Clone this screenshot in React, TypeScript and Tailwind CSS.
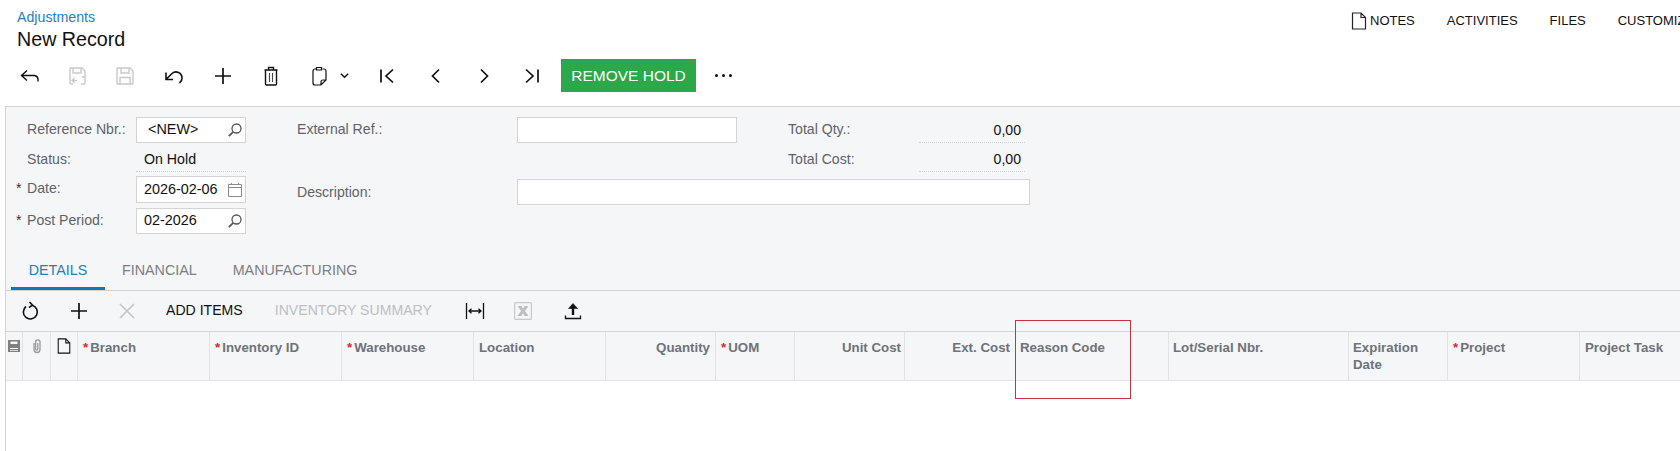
import type { ReactNode } from "react";

const font = "font-['Liberation_Sans',Arial,sans-serif]";

function Ico({ size = 24, color = "#111", sw = 1.4, children }: { size?: number; color?: string; sw?: number; children: ReactNode }) {
  return (
    <svg width={size} height={size} viewBox="0 0 24 24" fill="none" stroke={color} strokeWidth={sw}>
      {children}
    </svg>
  );
}

const BackIcon = () => (
  <Ico><path d="M3.500 11.500h13a4 4 0 0 1 3.500 3.500v2.500M9 6.500l-5.500 5 5.500 5" /></Ico>
);
const SaveBackIcon = () => (
  <Ico color="#c9c9c9">
    <path d="M8 20H6a1 1 0 0 1-1-1V5a1 1 0 0 1 1-1h11l3 3v12a1 1 0 0 1-1 1h-3M8 4v5h8V4M5 13h1M12 16.500H7M9.500 14 7 16.500 9.500 19M17 13h3" />
  </Ico>
);
const SaveIcon = () => (
  <Ico color="#c9c9c9">
    <path d="M5 4h12l3 3v12a1 1 0 0 1-1 1H5a1 1 0 0 1-1-1V5a1 1 0 0 1 1-1ZM8 4v5h8V4M7 20v-6.500h10V20" />
  </Ico>
);
const UndoIcon = () => (
  <Ico sw={1.6}><path d="M4 8.500V15.500h7M4.500 15 10 9.500a6 6 0 0 1 10 4.500 6 6 0 0 1-2.500 5" /></Ico>
);
const PlusIcon = () => (
  <Ico sw={1.7}><path d="M12 4v16M4 12h16" /></Ico>
);
const TrashIcon = () => (
  <Ico>
    <path d="M5.500 6h13M9.500 6V3.500h5V6M6.500 6v14a1 1 0 0 0 1 1h9a1 1 0 0 0 1-1V6" />
    <path d="M10.500 9v9M13.500 9v9" stroke="#444" strokeWidth={1.100} />
  </Ico>
);
const ClipboardIcon = () => (
  <Ico sw={1.2}>
    <path d="M9.500 5H8A2 2 0 0 0 6 7v12a2 2 0 0 0 2 2h6l5-5V7a2 2 0 0 0-2-2h-1.500M9.500 3.500h5V6h-5ZM14 21v-3a2 2 0 0 1 2-2h3" />
  </Ico>
);
const ChevDown = () => (
  <svg width={11} height={11} viewBox="0 0 12 12" fill="none" stroke="#111" strokeWidth={1.5}>
    <path d="M2 4l4 4 4-4" />
  </svg>
);
const FirstIcon = () => (
  <Ico sw={1.7}><path d="M6 5.500v13M18 5.500 11 12l7 6.500" /></Ico>
);
const PrevIcon = () => (
  <Ico sw={1.7}><path d="M15 5.500 8.500 12l6.500 6.500" /></Ico>
);
const NextIcon = () => (
  <Ico sw={1.7}><path d="M9 5.500 15.500 12 9 18.500" /></Ico>
);
const LastIcon = () => (
  <Ico sw={1.7}><path d="M18 5.500v13M6 5.500 13 12l-7 6.500" /></Ico>
);
const SearchIcon = () => (
  <svg width={16} height={16} viewBox="0 0 16 16" fill="none" stroke="#555" strokeWidth={1.3}>
    <circle cx={9.500} cy={6.500} r={4.500} />
    <path d="M6.200 9.800 1.800 14.200" strokeWidth={1.8} />
  </svg>
);
const CalendarIcon = () => (
  <svg width={16} height={16} viewBox="0 0 16 16" fill="none" stroke="#8a8a8a" strokeWidth={1}>
    <path d="M1.500 2.500h13v12h-13ZM1.500 5.500h13M4.500 1v2M11.500 1v2" />
  </svg>
);
const NoteIcon = ({ color = "#222", size = 18 }: { color?: string; size?: number }) => (
  <svg className="shrink-0" width={size} height={size} viewBox="0 0 18 18" fill="none" stroke={color} strokeWidth={1.2}>
    <path d="M2.500 1h8.500l4.500 4.500V17h-13ZM11 1v4.500h4.500" />
  </svg>
);
const RefreshIcon = () => (
  <Ico sw={1.6}><path d="M13 6.200A7 7 0 1 1 7 7.500M10.500 3 13.500 6.200 10 8.500" /></Ico>
);
const CloseIcon = () => (
  <Ico color="#c4c4c4" sw={1.6}><path d="M5 5l14 14M19 5 5 19" /></Ico>
);
const FitIcon = () => (
  <svg width={20} height={18} viewBox="0 0 20 18" fill="none" stroke="#111" strokeWidth={1.300}>
    <path d="M1.500 1v16M18.500 1v16" />
    <path d="M4 9h12M6.500 6.800 4 9l2.500 2.200M13.500 6.800 16 9l-2.500 2.200" />
  </svg>
);
const ExcelIcon = () => (
  <svg width={18} height={18} viewBox="0 0 18 18" fill="none">
    <rect x={0.600} y={0.600} width={16.800} height={16.800} rx={1} stroke="#c8c8c8" strokeWidth={1.200} />
    <path d="M3.500 4h4l1.500 2.800L10.500 4h4l-3.500 5 3.500 5h-4L9 11.200 7.500 14h-4L7 9Z" fill="#bfbfbf" />
  </svg>
);
const UploadIcon = () => (
  <svg width={20} height={20} viewBox="0 0 20 20" fill="none" stroke="#111">
    <path d="M10 4v10" strokeWidth={2.400} />
    <path d="M5.500 7.500 10 2.500l4.500 5Z" fill="#111" strokeWidth={0.600} />
    <path d="M2.500 14.500v3h15v-3" strokeWidth={1.300} />
  </svg>
);
const PrintIcon = () => (
  <svg width={14} height={14} viewBox="0 0 14 14" fill="#808080">
    <path d="M1 1h12v12H1ZM3.500 2.500V5h7V2.500ZM3 9v1h8V9Zm0 2v.800h8V11Z" fillRule="evenodd" />
  </svg>
);
const ClipIcon = () => (
  <svg width={14} height={16} viewBox="0 0 14 16" fill="none" stroke="#9a9a9a" strokeWidth={1.300}>
    <path d="M4 5v6.500a3 3 0 0 0 6 0V4a2.200 2.200 0 0 0-4.400 0v7a1 1 0 0 0 2.200 0V5" />
  </svg>
);

const mainTools = [
  { cls: "", icon: <BackIcon /> },
  { cls: "ml-[23px]", icon: <SaveBackIcon /> },
  { cls: "ml-[24px]", icon: <SaveIcon /> },
  { cls: "ml-[25px]", icon: <UndoIcon /> },
  { cls: "ml-[25px]", icon: <PlusIcon /> },
  { cls: "ml-[24px]", icon: <TrashIcon /> },
  { cls: "ml-[24px]", icon: <ClipboardIcon /> },
  { cls: "ml-[8px]", icon: <ChevDown /> },
  { cls: "ml-[25px]", icon: <FirstIcon /> },
  { cls: "ml-[25px]", icon: <PrevIcon /> },
  { cls: "ml-[24px]", icon: <NextIcon /> },
  { cls: "ml-[24px]", icon: <LastIcon /> },
];

function Label({ star, children }: { star?: boolean; children: ReactNode }) {
  return (
    <div className="flex w-[120px] items-center pb-[1px] text-[14.100px] text-[#5f6368]">
      <span className="w-[11px] text-[#333]">{star ? "*" : ""}</span>
      {children}
    </div>
  );
}

function Input({ children, icon, pl = "pl-[7px]" }: { children: ReactNode; icon: ReactNode; pl?: string }) {
  return (
    <div className={`flex h-full w-[110px] items-center justify-between border border-[#d2d5d8] bg-white ${pl} pr-[2px] text-[14.400px] text-[#111]`}>
      <span>{children}</span>
      {icon}
    </div>
  );
}

const columns = [
  { w: 132, label: "Branch", star: true, cls: "border-r pl-[5px]" },
  { w: 132, label: "Inventory ID", star: true, cls: "border-r pl-[5px]" },
  { w: 132, label: "Warehouse", star: true, cls: "border-r pl-[5px]" },
  { w: 132, label: "Location", cls: "border-r pl-[5px]" },
  { w: 110, label: "Quantity", cls: "border-r pr-[5px] text-right" },
  { w: 79, label: "UOM", star: true, cls: "border-r pl-[5px]" },
  { w: 110, label: "Unit Cost", cls: "border-r pr-[3px] text-right" },
  { w: 111, label: "Ext. Cost", cls: "pr-[6px] text-right" },
  { w: 153, label: "Reason Code", cls: "border-r pl-[4px]" },
  { w: 180, label: "Lot/Serial Nbr.", cls: "border-r pl-[4px]" },
  { w: 99, label: "Expiration Date", cls: "border-r pl-[4px]" },
  { w: 132, label: "Project", star: true, cls: "border-r pl-[5px]" },
  { w: 102, label: "Project Task", cls: "pl-[5px]" },
];

export default function App() {
  return (
    <div className={`${font} relative h-[451px] w-[1680px] overflow-hidden bg-white`}>
      {/* title + top links */}
      <div className="flex h-[59px] justify-between pl-[17px]">
        <div>
          <div className="pt-[9px] text-[14.200px] leading-[17px] text-[#1f7fc1]">Adjustments</div>
          <div className="mt-[1px] text-[19.700px] leading-[24px] text-[#111]">New Record</div>
        </div>
        <div className="flex h-[42px] w-[330px] shrink-0 items-center overflow-hidden whitespace-nowrap text-[13px] text-[#111]">
          <NoteIcon />
          <span className="ml-[2px]">NOTES</span>
          <span className="ml-[32px]">ACTIVITIES</span>
          <span className="ml-[32px]">FILES</span>
          <span className="ml-[32px]">CUSTOMIZATION</span>
        </div>
      </div>

      {/* main toolbar */}
      <div className="flex h-[33px] items-center pl-[18px]">
        {mainTools.map((t, i) => (
          <div key={i} className={`flex shrink-0 ${t.cls}`}>
            {t.icon}
          </div>
        ))}
        <div className="ml-[17px] flex h-[33px] w-[135px] items-center justify-center bg-[#2ba84a] text-[15.500px] text-white">
          REMOVE HOLD
        </div>
        <div className="ml-[19px] flex gap-[4px]">
          <span className="h-[3px] w-[3px] rounded-full bg-[#111]" />
          <span className="h-[3px] w-[3px] rounded-full bg-[#111]" />
          <span className="h-[3px] w-[3px] rounded-full bg-[#111]" />
        </div>
      </div>

      {/* form panel */}
      <div className="ml-[5px] mt-[14px] border-l border-t border-[#d2d5d8] bg-[#f4f6f8]">
        <div className="flex h-[148px] pl-[10px] pt-[10px]">
          <div className="flex w-[230px] shrink-0 flex-col">
            <div className="flex h-[26px]">
              <Label><span>Reference Nbr.:</span></Label>
              <Input icon={<SearchIcon />} pl="pl-[11px]">&lt;NEW&gt;</Input>
            </div>
            <div className="flex h-[29px]">
              <div className="flex pt-[5px]"><Label><span>Status:</span></Label></div>
              <div className="flex w-[110px] items-center border-b border-dotted border-[#cfcfcf] pl-[8px] pt-[5px] text-[14.200px] text-[#111]">On Hold</div>
            </div>
            <div className="mt-[4px] flex h-[27px]">
              <Label star><span>Date:</span></Label>
              <Input icon={<CalendarIcon />}>2026-02-06</Input>
            </div>
            <div className="mt-[5px] flex h-[26px]">
              <Label star><span>Post Period:</span></Label>
              <Input icon={<SearchIcon />}>02-2026</Input>
            </div>
          </div>

          <div className="ml-[51px] flex flex-col text-[14.100px] text-[#5f6368]">
            <div className="flex h-[26px] items-center">
              <span className="w-[220px] pb-[1px]">External Ref.:</span>
              <div className="h-full w-[220px] border border-[#d2d5d8] bg-white" />
              <span className="ml-[51px] w-[131px] pb-[1px]">Total Qty.:</span>
              <div className="flex h-full w-[106px] items-center justify-end border-b border-dotted border-[#cfcfcf] pr-[4px] pt-[2px] text-[#111]">0,00</div>
            </div>
            <div className="flex h-[29px] items-center">
              <span className="ml-[491px] w-[131px] pt-[4px]">Total Cost:</span>
              <div className="flex h-full w-[106px] items-center justify-end border-b border-dotted border-[#cfcfcf] pr-[4px] pt-[5px] text-[#111]">0,00</div>
            </div>
            <div className="mt-[7px] flex h-[26px] items-center">
              <span className="w-[220px] pt-[1px]">Description:</span>
              <div className="h-full w-[513px] border border-[#d2d5d8] bg-white" />
            </div>
          </div>
        </div>

        {/* tabs */}
        <div className="flex h-[36px] border-b border-[#d2d5d8] pl-[5px] text-[14.300px] text-[#7b7f84]">
          <div className="flex w-[94px] items-center justify-center border-b-[3px] border-[#0f78bd] text-[#1f7fc1]">DETAILS</div>
          <div className="ml-[17px] flex items-center pb-[3px]">FINANCIAL</div>
          <div className="ml-[36px] flex items-center pb-[3px]">MANUFACTURING</div>
        </div>

        {/* grid toolbar */}
        <div className="flex h-[40px] items-center pl-[1px] text-[14.100px]">
          <div className="flex w-[48px] justify-center"><RefreshIcon /></div>
          <div className="flex w-[48px] justify-center"><PlusIcon /></div>
          <div className="flex w-[48px] justify-center"><CloseIcon /></div>
          <span className="ml-[15px] text-[#111]">ADD ITEMS</span>
          <span className="ml-[32px] text-[#bdbfc2]">INVENTORY SUMMARY</span>
          <div className="ml-[33px]"><FitIcon /></div>
          <div className="ml-[29px]"><ExcelIcon /></div>
          <div className="ml-[31px]"><UploadIcon /></div>
        </div>

        {/* grid header */}
        <div className="flex h-[50px] border-y border-t-[#d2d5d8] border-b-[#e1e3e6] text-[13.300px] font-bold leading-[17px] text-[#6f7278]">
          <div className="flex w-[17px] shrink-0 justify-center border-r border-[#e1e3e6] pt-[7px]"><PrintIcon /></div>
          <div className="flex w-[28px] shrink-0 justify-center border-r border-[#e1e3e6] pt-[6px]"><ClipIcon /></div>
          <div className="flex w-[27px] shrink-0 justify-center border-r border-[#e1e3e6] pt-[6px]"><NoteIcon color="#111" size={16} /></div>
          {columns.map((c) => (
            <div
              key={c.label}
              className={`shrink-0 border-[#e1e3e6] pt-[7px] ${c.cls}`}
              style={{ width: c.w }}
            >
              {c.star && <span className="mr-[2px] text-[#e0262d]">*</span>}
              {c.label}
            </div>
          ))}
        </div>
      </div>

      {/* grid body: left border continues */}
      <div className="ml-[5px] h-[80px] border-l border-[#d2d5d8]" />

      {/* red annotation box */}
      <div className="absolute left-[1015px] top-[320px] h-[79px] w-[116px] border border-[#c2333f]" />
    </div>
  );
}
